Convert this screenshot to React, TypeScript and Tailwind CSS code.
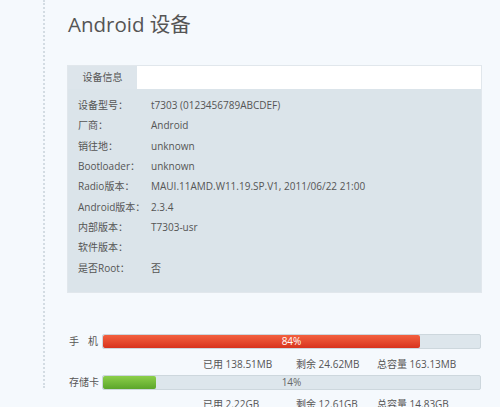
import React from "react";

const rows: [string, string][] = [
  ["设备型号：", "t7303 (0123456789ABCDEF)"],
  ["厂商：", "Android"],
  ["销往地：", "unknown"],
  ["Bootloader：", "unknown"],
  ["Radio版本：", "MAUI.11AMD.W11.19.SP.V1, 2011/06/22 21:00"],
  ["Android版本：", "2.3.4"],
  ["内部版本：", "T7303-usr"],
  ["软件版本：", ""],
  ["是否Root：", "否"],
];

const font = { fontFamily: '"Open Sans", "Noto Sans CJK SC", sans-serif' };

function Bar({ pct, color, textColor }: { pct: number; color: "red" | "green"; textColor: string }) {
  return (
    <div className="relative h-[15px] w-[379px] rounded-[2px] border border-[#cdd7dd] bg-[#dde6ec] overflow-hidden">
      <div
        className={
          color === "red"
            ? "h-full rounded-[2px] bg-gradient-to-b from-[#f3603f] to-[#d8321d]"
            : "h-full rounded-[2px] bg-gradient-to-b from-[#8ccf4a] to-[#5ba62a]"
        }
        style={{ width: `${pct}%` }}
      />
      <div className={`absolute inset-0 flex items-center justify-center text-[10px] leading-none ${textColor}`}>
        {pct}%
      </div>
    </div>
  );
}

export default function App() {
  return (
    <div className="w-[500px] h-[407px] overflow-hidden bg-[#f5f9fd] text-[#555] flex" style={font}>
      <div className="w-[45px] h-[388px] shrink-0 border-r-2 border-dotted border-[#d3dce3]" />
      <div className="ml-[22px] flex flex-col">
        <div className="mt-[10px] h-[28px] pl-[1px] text-[20.5px] leading-[28px] text-[#555]">Android 设备</div>
        <div className="mt-[27px] w-[415px] border border-[#e1e7ec]">
          <div className="flex h-[23px] bg-white">
            <div className="w-[69px] bg-[#dde5eb] flex items-center justify-center text-[10px] text-[#555]">设备信息</div>
          </div>
          <div className="bg-[#dbe4ea] pt-[6px] pb-[14px] pl-[10px]">
            {rows.map(([k, v]) => (
              <div key={k} className="flex h-[20.3px] items-center text-[10px] leading-none">
                <div className="w-[73px] whitespace-nowrap">{k}</div>
                <div className="whitespace-nowrap">{v}</div>
              </div>
            ))}
          </div>
        </div>
        <div className="mt-[41px] flex items-center h-[15px]">
          <div className="w-[31px] flex justify-between text-[10px] pl-[2px]"><span>手</span><span>机</span></div>
          <div className="ml-[4px]"><Bar pct={84} color="red" textColor="text-white" /></div>
        </div>
        <div className="mt-[7px] flex text-[10px] leading-[16px] pl-[136px] whitespace-nowrap">
          <div className="w-[93px]">已用 138.51MB</div>
          <div className="w-[81px]">剩余 24.62MB</div>
          <div>总容量 163.13MB</div>
        </div>
        <div className="mt-[3px] flex items-center h-[15px]">
          <div className="w-[31px] text-[10px] pl-[2px] whitespace-nowrap">存储卡</div>
          <div className="ml-[4px]"><Bar pct={14} color="green" textColor="text-[#666]" /></div>
        </div>
        <div className="mt-[6px] flex text-[10px] leading-[16px] pl-[136px] whitespace-nowrap">
          <div className="w-[93px]">已用 2.22GB</div>
          <div className="w-[81px]">剩余 12.61GB</div>
          <div>总容量 14.83GB</div>
        </div>
      </div>
    </div>
  );
}
